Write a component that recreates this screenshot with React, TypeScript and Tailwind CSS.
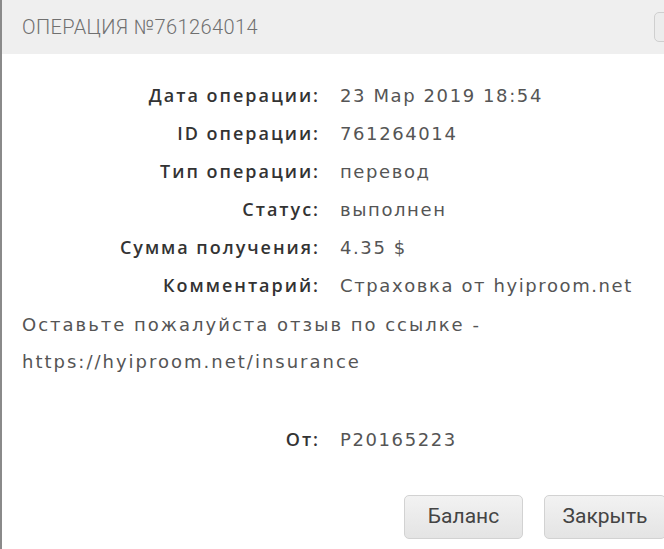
const rows = [
  { label: "Дата операции:", value: "23 Мар 2019 18:54" },
  { label: "ID операции:", value: "761264014" },
  { label: "Тип операции:", value: "перевод" },
  { label: "Статус:", value: "выполнен" },
  { label: "Сумма получения:", value: "4.35 $" },
  { label: "Комментарий:", value: "Страховка от hyiproom.net" },
];

function Row({ label, value }: { label: string; value: string }) {
  return (
    <div className="flex h-[38px] items-center">
      <div className="w-[318px] shrink-0 text-right text-[18px] font-semibold text-[#333] font-['Open_Sans',sans-serif] tracking-[0.11em]">
        {label}
      </div>
      <div className="pl-[20px] whitespace-nowrap text-[#555] text-[18px] font-['DejaVu_Sans',sans-serif] tracking-[1.6px]">
        {value}
      </div>
    </div>
  );
}

function DialogButton({ children }: { children: string }) {
  return (
    <button className="h-[44px] w-full rounded-[5px] border border-[#d2d2d2] bg-gradient-to-b from-[#f2f2f2] to-[#e4e4e4] text-[21px] text-[#444] font-['Roboto',sans-serif]">
      {children}
    </button>
  );
}

export default function App() {
  return (
    <div className="h-[549px] w-[664px] overflow-hidden border-l-2 border-[#8a8a8a] bg-white">
      <div className="flex h-[54px] items-center justify-between bg-[#efefef] pl-[20px]">
        <h1 className="text-[20px] font-light tracking-[0.02em] text-[#707070] font-['Roboto',sans-serif]">
          ОПЕРАЦИЯ №761264014
        </h1>
        <div className="h-[30px] w-[26px] translate-x-[16px] rounded-[5px] border border-[#cfcfcf] bg-[#ececec]" />
      </div>

      <div className="pt-[22px]">
        {rows.map((row) => (
          <Row key={row.label} label={row.label} value={row.value} />
        ))}
      </div>

      <div className="px-[20px] pt-[2px] text-[18px] text-[#555] leading-[37px] font-['DejaVu_Sans',sans-serif] tracking-[2px]">
        <p>Оставьте пожалуйста отзыв по ссылке -</p>
        <p>https://hyiproom.net/insurance</p>
      </div>

      <div className="mt-[40px]">
        <Row label="От:" value="P20165223" />
      </div>

      <div className="mt-[37px] flex justify-end gap-[21px]">
        <div className="w-[119px] shrink-0">
          <DialogButton>Баланс</DialogButton>
        </div>
        <div className="w-[122px] shrink-0 -mr-[2px]">
          <DialogButton>Закрыть</DialogButton>
        </div>
      </div>
    </div>
  );
}
